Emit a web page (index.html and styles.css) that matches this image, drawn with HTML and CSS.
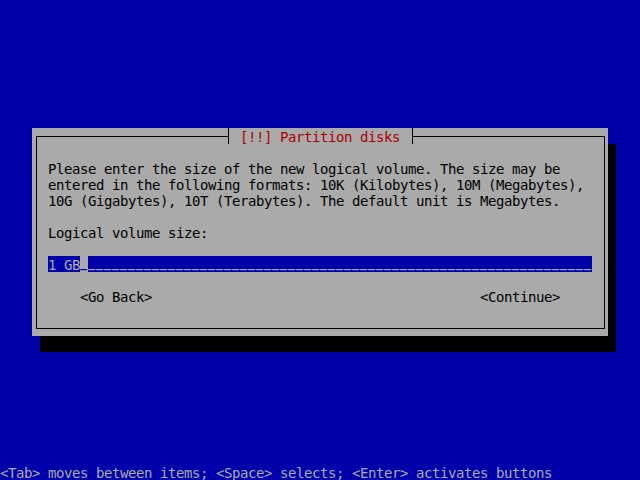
FILE: index.html
```html
<!DOCTYPE html>
<html>
<head>
<meta charset="utf-8">
<link rel="stylesheet" href="styles.css">
</head>
<body>
<div class="screen">
  <div class="dialog">
    <div class="titlebar">
      <div class="tl"></div>
      <div class="lt"></div>
      <div class="title row"> [!!] Partition disks </div>
      <div class="rt"></div>
      <div class="tr"></div>
    </div>
    <div class="frame">
      <div class="para">Please enter the size of the new logical volume. The size may be
entered in the following formats: 10K (Kilobytes), 10M (Megabytes),
10G (Gigabytes), 10T (Terabytes). The default unit is Megabytes.</div>
      <div class="label row">Logical volume size:</div>
      <div class="input"><span class="sel row">1 GB</span><span class="cursor us">_</span><span class="rest us">_______________________________________________________________</span></div>
      <div class="buttons row"><span>&lt;Go Back&gt;</span><span>&lt;Continue&gt;</span></div>
    </div>
  </div>
  <div class="help row">&lt;Tab&gt; moves between items; &lt;Space&gt; selects; &lt;Enter&gt; activates buttons</div>
</div>
</body>
</html>
```

FILE: styles.css
```css
html, body {
  margin: 0;
  padding: 0;
  background: #0000aa;
}
.screen {
  width: 640px;
  height: 480px;
  display: flex;
  flex-direction: column;
  background: #0000aa;
  font-family: "DejaVu Sans Mono", monospace;
  font-size: 14px;
  letter-spacing: -0.4287px;
  line-height: 16px;
  overflow: hidden;
}
.row {
  box-sizing: border-box;
  height: 16px;
  padding-top: 1px;
  white-space: pre;
}
.dialog {
  margin: 128px 0 0 32px;
  width: 576px;
  height: 208px;
  box-sizing: border-box;
  padding: 0 3px 0 4px;
  background: #aaaaaa;
  color: #000;
  box-shadow: 8px 16px 0 #000;
}
.titlebar {
  display: flex;
  height: 16px;
}
.tl, .tr {
  box-sizing: border-box;
  margin-top: 8px;
  height: 8px;
  border-top: 1px solid #000;
}
.tl {
  width: 188px;
  border-left: 1px solid #000;
}
.tr {
  flex: 1;
  border-right: 1px solid #000;
}
.lt, .rt {
  width: 8px;
  height: 16px;
}
.lt {
  background:
    linear-gradient(#000, #000) 4px 0 / 1px 16px no-repeat,
    linear-gradient(#000, #000) 0 8px / 4px 1px no-repeat;
}
.rt {
  background:
    linear-gradient(#000, #000) 4px 0 / 1px 16px no-repeat,
    linear-gradient(#000, #000) 4px 8px / 4px 1px no-repeat;
}
.title {
  width: 176px;
  color: #aa0000;
}
.frame {
  box-sizing: border-box;
  height: 185px;
  border: 1px solid #000;
  border-top: none;
  padding: 16px 0 0 11px;
  display: flex;
  flex-direction: column;
}
.para {
  box-sizing: border-box;
  white-space: pre;
  height: 48px;
  padding-top: 1px;
}
.label {
  margin-top: 16px;
}
.input {
  margin-top: 16px;
  width: 544px;
  height: 16px;
  display: flex;
}
.sel {
  background: #0000aa;
  color: #aaaaaa;
}
.us {
  height: 16px;
  white-space: pre;
  font-size: 11.63px;
  font-weight: bold;
  letter-spacing: 1px;
  line-height: 14px;
}
.cursor {
  background: #aaaaaa;
  color: #0000aa;
  width: 8px;
}
.rest {
  flex: 1;
  background: #0000aa;
  color: #aaaaaa;
}
.buttons {
  margin-top: 16px;
  width: 544px;
  padding: 1px 32px 0;
  display: flex;
  justify-content: space-between;
}
.help {
  margin-top: auto;
  color: #aaaaaa;
}
```
